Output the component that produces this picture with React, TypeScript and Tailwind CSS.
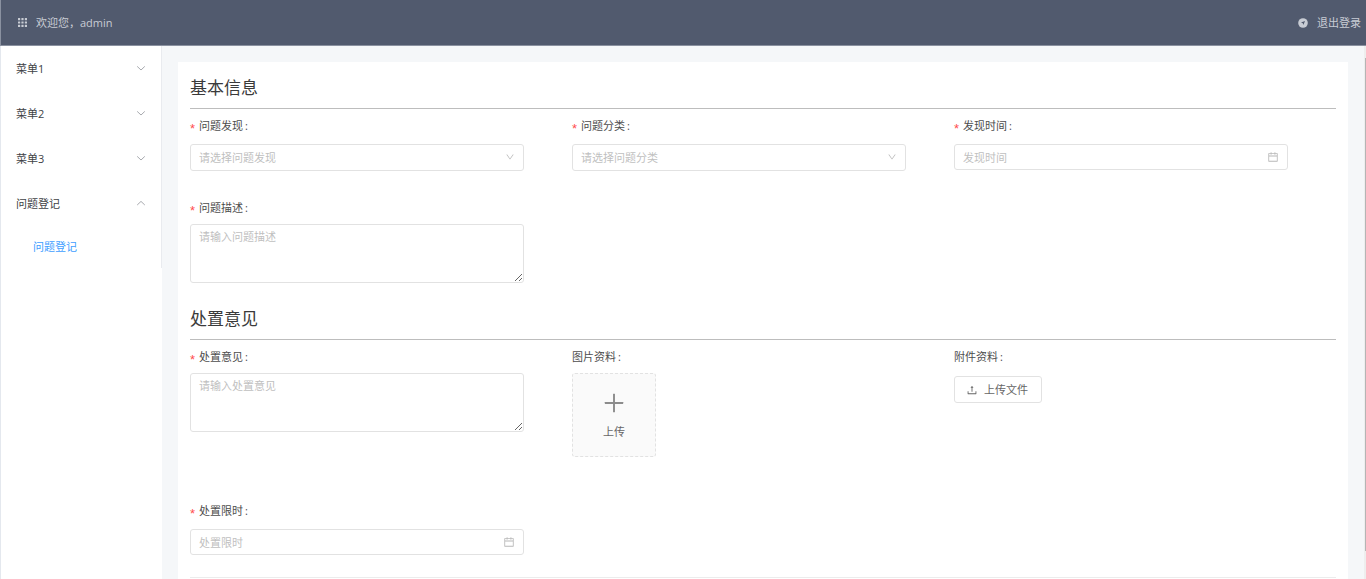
import React from "react";
import { AiOutlineCalendar, AiOutlineDown, AiOutlinePlus, AiOutlineUpload } from "react-icons/ai";

function GridIcon() {
  return (
    <svg viewBox="0 0 9 9" className="size-[9px] shrink-0" fill="currentColor" aria-hidden="true">
      {[0, 3.4, 6.8].map((y) =>
        [0, 3.4, 6.8].map((x) => <rect key={`${x}-${y}`} x={x} y={y} width="2.2" height="2.2" rx="0.3" />),
      )}
    </svg>
  );
}

function CompassIcon() {
  return (
    <svg viewBox="0 0 10 10" className="size-[10px] shrink-0" aria-hidden="true">
      <circle cx="5" cy="5" r="4.8" fill="currentColor" />
      <path d="M7 3 5.4 7 4.8 5.2 3 4.6Z" fill="#515a6e" />
    </svg>
  );
}

function Chevron({ up = false }: { up?: boolean }) {
  return (
    <svg viewBox="0 0 10 10" className="size-[10px] shrink-0 text-[#909399]" fill="none" stroke="currentColor" strokeWidth="0.8" aria-hidden="true">
      <path d={up ? "M1.2 6 5 2.4 8.8 6" : "M1.2 2.4 5 6 8.8 2.4"} />
    </svg>
  );
}

const menus = [
  { name: "菜单1", open: false },
  { name: "菜单2", open: false },
  { name: "菜单3", open: false },
  { name: "问题登记", open: true },
];

function Sidebar() {
  return (
    <aside className="w-[162px] shrink-0 border-l border-[#e4e8ee] bg-white">
      <nav className="border-r border-[#e9ebef] text-[#404246]">
        <ul>
          {menus.map((m) => (
            <li key={m.name}>
              <button type="button" aria-expanded={m.open} className="flex h-[45px] w-full items-center justify-between pr-[15px] pl-[15px]">
                <span>{m.name}</span>
                <Chevron up={m.open} />
              </button>
              {m.open && (
                <ul>
                  <li>
                    <a href="#register" className="flex h-[42px] items-center pl-8 text-[#409eff]">
                      问题登记
                    </a>
                  </li>
                </ul>
              )}
            </li>
          ))}
        </ul>
      </nav>
    </aside>
  );
}

function Field({ label, id, required = false, children }: { label: string; id: string; required?: boolean; children: React.ReactNode }) {
  return (
    <div className="pr-12">
      <label htmlFor={id} className="flex h-8 items-center text-[#4d4d4d]">
        {required && <span className="w-[9px] font-['Liberation_Sans',sans-serif] text-[13px] leading-none pt-1 text-[#ff4d4f]">*</span>}
        <span>{label}</span>
        <span className="pl-0.5">:</span>
      </label>
      {children}
    </div>
  );
}

function SelectBox({ id, placeholder }: { id: string; placeholder: string }) {
  return (
    <div className="relative mt-0.5">
      <select id={id} defaultValue="" className="h-[27px] w-full appearance-none rounded-[3px] border border-[#e2e2e2] bg-white px-2 text-[#bfbfbf] outline-none">
        <option value="">{placeholder}</option>
      </select>
      <AiOutlineDown className="pointer-events-none absolute top-2 right-[9px] size-[10px] text-[#b8b8b8]" />
    </div>
  );
}

function DateBox({ id, placeholder }: { id: string; placeholder: string }) {
  return (
    <div className="relative mt-0.5">
      <input id={id} type="text" placeholder={placeholder} className="block h-[26px] w-full rounded-[3px] border border-[#e2e2e2] bg-white px-2 outline-none placeholder:text-[#bfbfbf]" />
      <AiOutlineCalendar className="pointer-events-none absolute top-[7px] right-[9px] size-3 text-[#b8b8b8]" />
    </div>
  );
}

function TextBox({ id, placeholder }: { id: string; placeholder: string }) {
  return (
    <textarea
      id={id}
      placeholder={placeholder}
      className="block h-[59px] w-full resize-y rounded-[3px] border border-[#e2e2e2] bg-white px-2 py-1 leading-4 outline-none placeholder:text-[#bfbfbf]"
    />
  );
}

function SectionTitle({ children }: { children: React.ReactNode }) {
  return <h2 className="border-b border-[#bdbdbd] pb-1.5 text-[17px] leading-7 text-[#3a3a3a]">{children}</h2>;
}

export default function App() {
  return (
    <div className="flex h-screen flex-col overflow-hidden bg-[#f5f7f9] font-['Open_Sans','Noto_Sans_CJK_SC',sans-serif] text-[11px] leading-4">
      <header className="flex h-[46px] shrink-0 items-center justify-between border-b border-l border-[#8a91a0] bg-[#515a6e] pr-[5px] pl-4 text-[#c8ccd4]">
        <div className="flex items-center gap-[9px] pl-px">
          <GridIcon />
          <span>欢迎您，admin</span>
        </div>
        <button type="button" className="flex items-center gap-[9px]">
          <CompassIcon />
          <span>退出登录</span>
        </button>
      </header>

      <div className="flex min-h-0 flex-1">
        <Sidebar />
        <main className="min-w-0 flex-1 overflow-y-auto p-4 [scrollbar-width:none]">
          <form className="bg-white px-3 pt-3 pb-16">
            <section>
              <SectionTitle>基本信息</SectionTitle>
              <div className="grid grid-cols-3 pt-px">
                <div className="h-[82px]">
                  <Field id="found" label="问题发现" required>
                    <SelectBox id="found" placeholder="请选择问题发现" />
                  </Field>
                </div>
                <Field id="category" label="问题分类" required>
                  <SelectBox id="category" placeholder="请选择问题分类" />
                </Field>
                <Field id="found-time" label="发现时间" required>
                  <DateBox id="found-time" placeholder="发现时间" />
                </Field>
                <div className="pb-[22px]">
                  <Field id="description" label="问题描述" required>
                    <TextBox id="description" placeholder="请输入问题描述" />
                  </Field>
                </div>
              </div>
            </section>

            <section>
              <SectionTitle>处置意见</SectionTitle>
              <div className="grid grid-cols-3 pt-px">
                <Field id="opinion" label="处置意见" required>
                  <TextBox id="opinion" placeholder="请输入处置意见" />
                </Field>
                <div className="pb-[38px]">
                  <Field id="picture" label="图片资料">
                    <button id="picture" type="button" className="flex size-[84px] flex-col items-center justify-center gap-2 rounded-[3px] border border-dashed border-[#e2e2e2] bg-[#fafafa] text-[#666666]">
                      <AiOutlinePlus className="size-[26px] text-[#8c8c8c]" />
                      <span>上传</span>
                    </button>
                  </Field>
                </div>
                <Field id="attachment" label="附件资料">
                  <button id="attachment" type="button" className="mt-[3px] flex h-[27px] items-center gap-1.5 rounded-[3px] border border-[#e2e2e2] bg-white px-[11px] text-[#666666]">
                    <AiOutlineUpload className="size-3" />
                    <span className="pr-0.5">上传文件</span>
                  </button>
                </Field>
                <Field id="deadline" label="处置限时" required>
                  <DateBox id="deadline" placeholder="处置限时" />
                </Field>
              </div>
            </section>
            <hr className="mt-[22px] border-[#ececec]" />
          </form>
        </main>
        <div className="w-0.5 shrink-0 bg-[#eeeeee] pt-3 pb-7 pl-px">
          <div className="h-full bg-[#b5b5b5]" />
        </div>
      </div>
    </div>
  );
}
